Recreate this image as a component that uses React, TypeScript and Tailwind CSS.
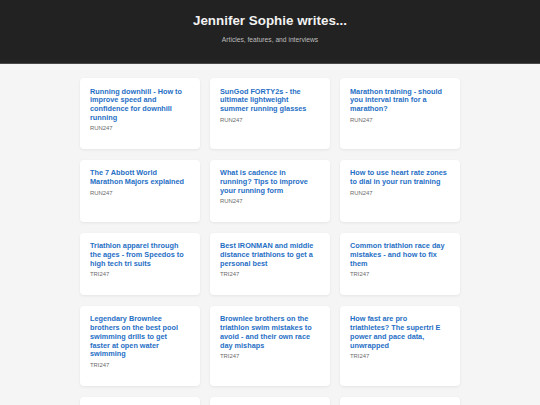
import React from "react";

type Article = { title: string; source: string };

const articles: Article[] = [
  { title: "Running downhill - How to improve speed and confidence for downhill running", source: "RUN247" },
  { title: "SunGod FORTY2s - the ultimate lightweight summer running glasses", source: "RUN247" },
  { title: "Marathon training - should you interval train for a marathon?", source: "RUN247" },
  { title: "The 7 Abbott World Marathon Majors explained", source: "RUN247" },
  { title: "What is cadence in running? Tips to improve your running form", source: "RUN247" },
  { title: "How to use heart rate zones to dial in your run training", source: "RUN247" },
  { title: "Triathlon apparel through the ages - from Speedos to high tech tri suits", source: "TRI247" },
  { title: "Best IRONMAN and middle distance triathlons to get a personal best", source: "TRI247" },
  { title: "Common triathlon race day mistakes - and how to fix them", source: "TRI247" },
  { title: "Legendary Brownlee brothers on the best pool swimming drills to get faster at open water swimming", source: "TRI247" },
  { title: "Brownlee brothers on the triathlon swim mistakes to avoid - and their own race day mishaps", source: "TRI247" },
  { title: "How fast are pro triathletes? The supertri E power and pace data, unwrapped", source: "TRI247" },
  { title: "Triathlon transitions - how to save time in T1 and T2", source: "TRI247" },
  { title: "Open water swimming tips for your first triathlon", source: "TRI247" },
  { title: "Brick sessions explained - why they matter for triathletes", source: "TRI247" },
];

export default function App() {
  return (
    <div
      className="min-h-screen bg-[#f5f5f5]"
      style={{ fontFamily: '"Liberation Sans", Arial, sans-serif' }}
    >
      <header className="flex h-[64px] flex-col items-center border-b border-[#4a4a4a] bg-[#222222] pt-[12px]">
        <h1 className="text-[13.4px] font-bold leading-[18px] text-[#f2f2f2]">
          Jennifer Sophie writes...
        </h1>
        <p className="mt-[5px] text-[6.7px] leading-[9px] text-[#bdbdbd]">
          Articles, features, and interviews
        </p>
      </header>

      <main className="mx-auto grid w-[380px] grid-cols-3 gap-x-[10px] gap-y-[10.6px] pt-[14px]">
        {articles.map((a, i) => (
          <article
            key={i}
            className="rounded-[4px] bg-white pb-[16.2px] pl-[10px] pr-[12.2px] pt-[9.5px] shadow-[0_1px_3px_rgba(0,0,0,0.07)]"
          >
            <h2 className="mb-[1.8px] text-[7.3px] font-bold leading-[8.75px] text-[#1f6fc5]">
              {a.title}
            </h2>
            <p className="text-[5.9px] leading-[8.75px] text-[#6b6b6b]">{a.source}</p>
          </article>
        ))}
      </main>
    </div>
  );
}
